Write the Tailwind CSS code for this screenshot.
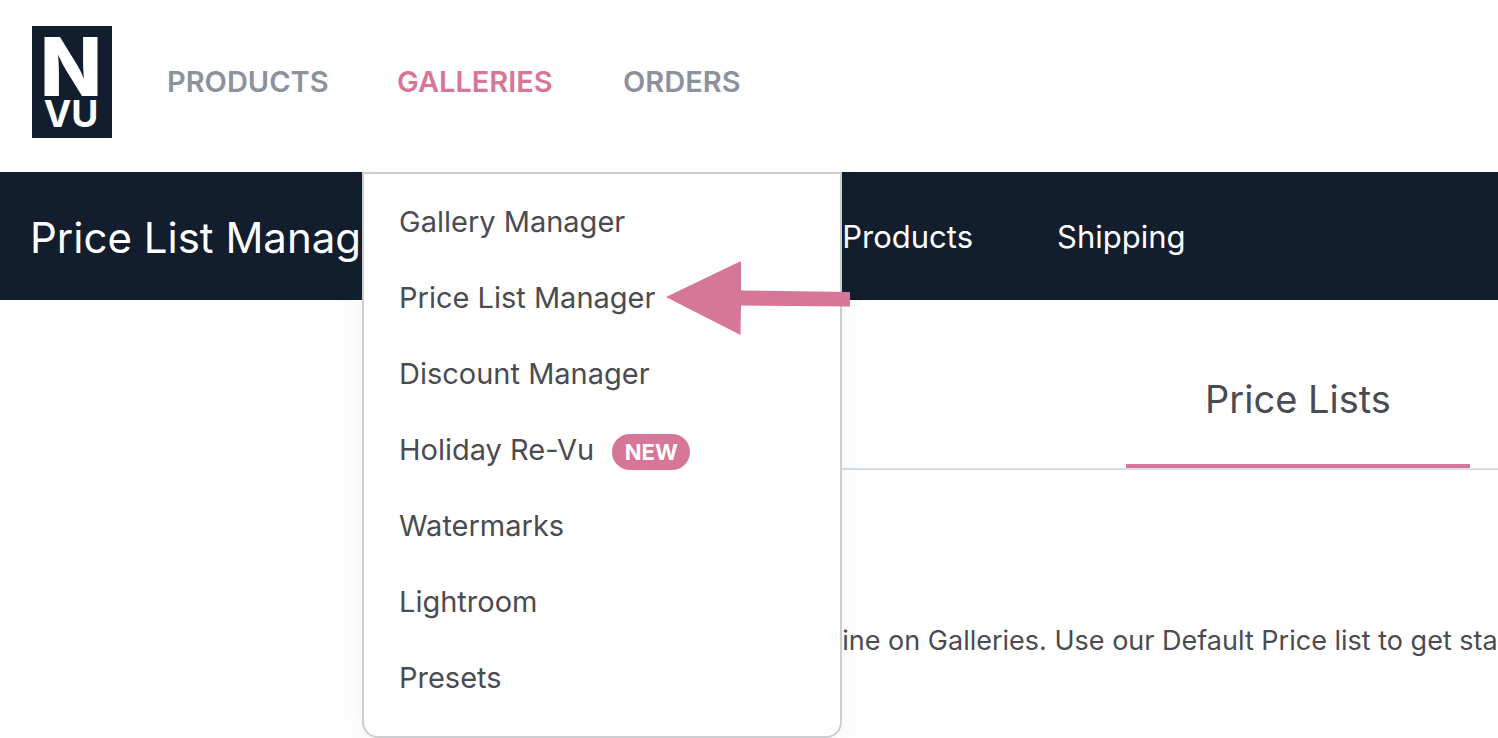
<!DOCTYPE html>
<html lang="en">
<head>
  <meta charset="UTF-8">
  <meta name="viewport" content="width=device-width, initial-scale=1.0">
  <title>Price List Manager</title>
  <script src="https://cdn.jsdelivr.net/npm/@tailwindcss/browser@4"></script>
</head>
<body class="bg-white min-h-screen overflow-x-hidden font-['Inter','Liberation_Sans',sans-serif] text-[#4b4b52]">

  <!-- Top navigation -->
  <header class="flex items-start h-[172px] pl-8 pt-[26px]">
    <a href="#" aria-label="NVU home" class="shrink-0">
      <svg class="w-20 h-28" viewBox="0 0 80 112">
        <rect width="80" height="112" fill="#121e2d"/>
        <text x="39" y="70" text-anchor="middle" font-family="Inter, sans-serif" font-size="81" font-weight="800" fill="#fff">N</text>
        <text x="39" y="101" text-anchor="middle" font-family="Inter, sans-serif" font-size="37" font-weight="700" fill="#fff">VU</text>
      </svg>
    </a>

    <nav class="flex text-[29px] leading-[112px] font-semibold text-[#8b929c]">
      <a href="#" class="ml-[55px] w-[158px]">PRODUCTS</a>

      <div class="relative ml-[72px] w-[154px]">
        <a href="#" class="text-[#d67798]">GALLERIES</a>

        <!-- Dropdown menu -->
        <ul class="absolute z-10 top-[146px] -left-[35px] w-[480px] pt-[10px] pb-5 px-[35px] bg-white/[99.5%] border-2 border-[#cdced0] rounded-b-2xl shadow-[0_8px_32px_rgba(18,60,65,0.06)] text-[29px] leading-[76px] font-normal text-[#4b4b52]">
          <li><a href="#" class="block">Gallery Manager</a></li>
          <li class="relative">
            <a href="#" class="block">Price List Manager</a>
            <svg class="absolute left-[267px] top-0 w-[184px] h-[76px]" viewBox="0 0 184 76" fill="#d67798">
              <path d="M0 37 75 1 75 30.500 184 32V46.500L75 45.500 74.500 75Z"/>
            </svg>
          </li>
          <li><a href="#" class="block">Discount Manager</a></li>
          <li>
            <a href="#" class="flex items-center">Holiday Re-Vu
              <span class="ml-[18px] mt-1 w-[78px] h-9 rounded-full bg-[#d67798] text-center text-[22px] leading-9 font-bold text-white">NEW</span>
            </a>
          </li>
          <li><a href="#" class="block">Watermarks</a></li>
          <li><a href="#" class="block">Lightroom</a></li>
          <li><a href="#" class="block">Presets</a></li>
        </ul>
      </div>

      <a href="#" class="ml-[72px]">ORDERS</a>
    </nav>
  </header>

  <!-- Page bar -->
  <div class="flex items-center h-32 pl-[30px] pt-0.5 bg-[#121e2d] text-white whitespace-nowrap">
    <h1 class="w-[460px] text-[42px]">Price List Manager</h1>
    <nav class="flex text-[31px]">
      <a href="#" class="w-[230px]">Price Lists</a>
      <a href="#" class="w-[253px] text-right">Custom Products</a>
      <a href="#" class="ml-[84px]">Shipping</a>
    </nav>
  </div>

  <main class="pl-[512px] whitespace-nowrap">
    <!-- Tabs -->
    <div class="flex justify-end pt-[34px] pr-7 border-b-2 border-[#d9dfe5]">
      <a href="#" class="w-[344px] h-[134px] border-b-4 border-[#d67798] text-center text-[38px] leading-[130px]">Price Lists</a>
    </div>

    <section class="pt-[60px]">
      <h2 class="text-[38px] leading-12">Galleries</h2>
      <p class="mt-11 text-[27px] leading-[38px]">
        Offer your entire product line on Galleries. Use our Default Price list to get started<br>
        product builder
      </p>
    </section>
  </main>

</body>
</html>
